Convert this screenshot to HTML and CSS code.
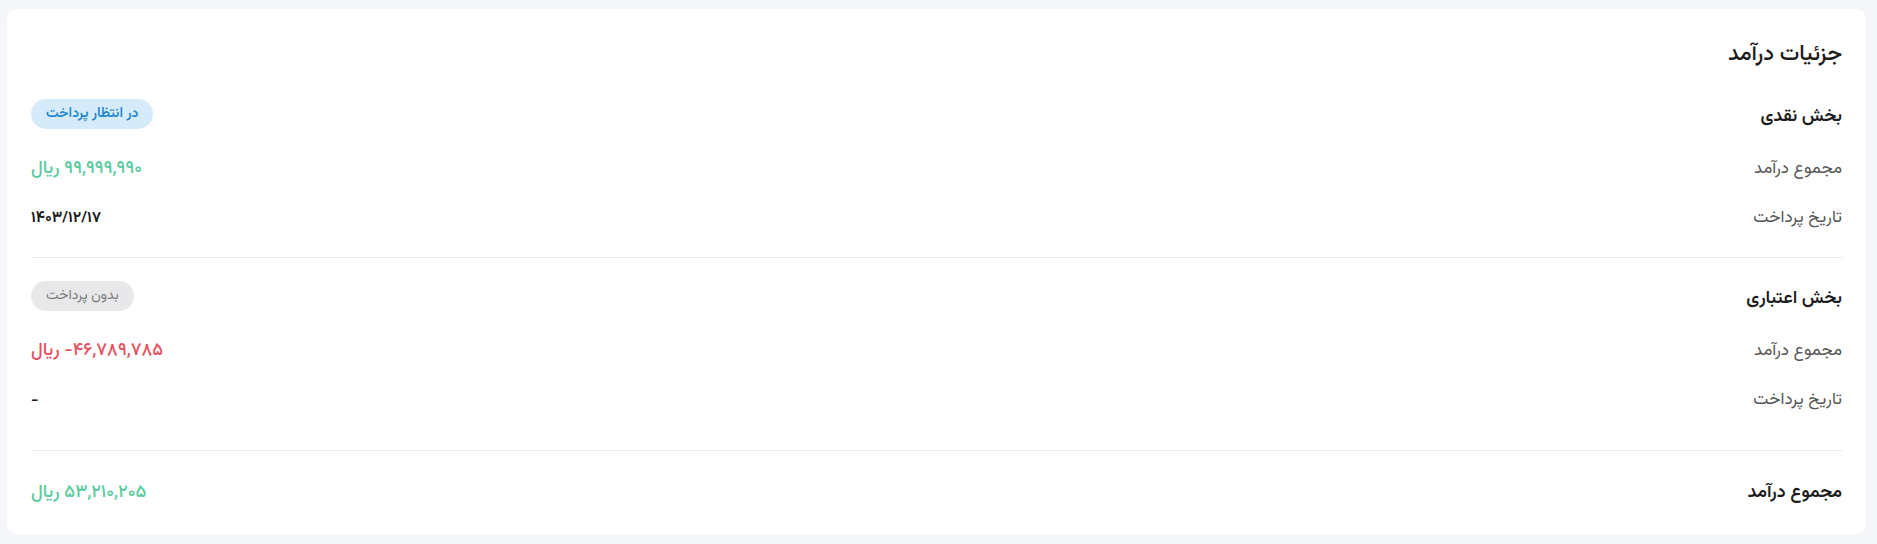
FILE: index.html
```html
<!DOCTYPE html>
<html lang="fa" dir="rtl">
<head>
  <meta charset="UTF-8">
  <title>جزئیات درآمد</title>
  <link rel="stylesheet" href="styles.css">
</head>
<body>
  <div class="card">
    <h2 class="card-title">جزئیات درآمد</h2>

    <div class="section">
      <div class="section-head">
        <span class="section-name">بخش نقدی</span>
        <span class="badge badge-pending">در انتظار پرداخت</span>
      </div>
      <div class="row">
        <span class="label">مجموع درآمد</span>
        <span class="value positive">۹۹,۹۹۹,۹۹۰ ریال</span>
      </div>
      <div class="row">
        <span class="label">تاریخ پرداخت</span>
        <span class="value date">۱۴۰۳/۱۲/۱۷</span>
      </div>
    </div>

    <div class="section section-credit">
      <div class="section-head">
        <span class="section-name">بخش اعتباری</span>
        <span class="badge badge-none">بدون پرداخت</span>
      </div>
      <div class="row">
        <span class="label">مجموع درآمد</span>
        <span class="value negative">۴۶,۷۸۹,۷۸۵- ریال</span>
      </div>
      <div class="row">
        <span class="label">تاریخ پرداخت</span>
        <span class="value date">-</span>
      </div>
    </div>

    <div class="total">
      <span class="total-label">مجموع درآمد</span>
      <span class="value positive">۵۳,۲۱۰,۲۰۵ ریال</span>
    </div>
  </div>
</body>
</html>
```

FILE: styles.css
```css
body { margin: 0; padding: 9px 11px 10px 7px; background: #f5f6fa; font-family: "Vazirmatn", "Noto Sans Arabic", "DejaVu Sans", sans-serif; color: #1c1c1c; }
.card { background: #fff; border-radius: 10px; padding: 32px 24px 29px; }
.card-title { margin: 0 0 30px; font-size: 22px; line-height: 28px; font-weight: 500; }

.section { padding: 23px 0 27px; border-bottom: 1px solid #ececef; }
.section:first-of-type { padding-top: 0; }
.section-credit { padding-bottom: 38px; }
.section-head { display: flex; justify-content: space-between; align-items: center; height: 30px; margin-bottom: 28px; }
.section-name { font-size: 18px; font-weight: 600; padding-top: 6px; }

.badge { display: inline-block; height: 30px; line-height: 30px; padding: 0 15px; border-radius: 15px; font-size: 14px; }
.badge-pending { background: #d5ebfa; color: #2388cf; font-weight: 600; }
.badge-none { background: #e8e8ea; color: #7a7a7a; }

.row { display: flex; justify-content: space-between; align-items: center; line-height: 24px; margin-bottom: 25px; }
.row:last-child { margin-bottom: 0; }
.label { font-size: 17px; color: #555; }
.value { font-size: 18px; font-weight: 500; }
.positive { color: #5bcb9f; }
.negative { color: #e5525e; }
.date { font-size: 15.5px; font-weight: 700; color: #1c1c1c; }

.total { display: flex; justify-content: space-between; align-items: center; line-height: 24px; padding-top: 30px; }
.total-label { font-size: 18px; font-weight: 600; }
```
